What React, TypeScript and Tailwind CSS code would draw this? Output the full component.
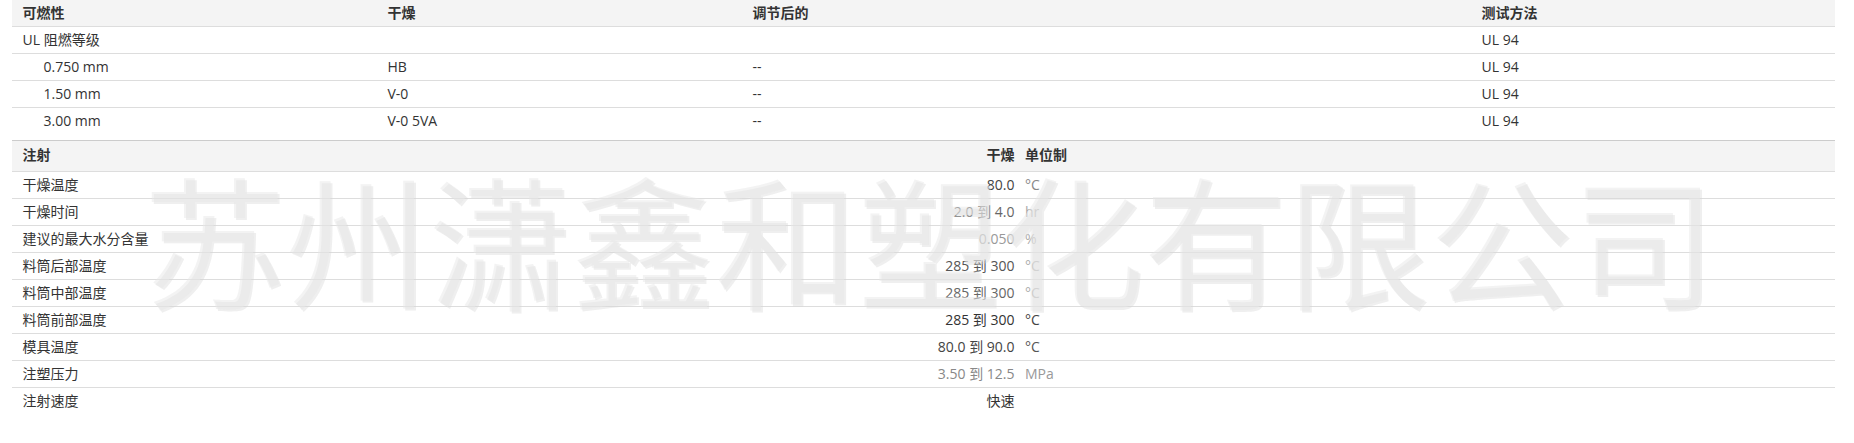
const font = { fontFamily: '"Open Sans","Noto Sans CJK SC",sans-serif' };

const t1 = [
  ["UL 阻燃等级", "", "", "UL 94", false],
  ["0.750 mm", "HB", "--", "UL 94", true],
  ["1.50 mm", "V-0", "--", "UL 94", true],
  ["3.00 mm", "V-0 5VA", "--", "UL 94", true],
] as const;

const t2 = [
  ["干燥温度", "80.0", "°C", "text-[#444]", "text-[#888]"],
  ["干燥时间", "2.0 到 4.0", "hr", "text-[#666]", "text-[#aaa]"],
  ["建议的最大水分含量", "0.050", "%", "text-[#999]", "text-[#aaa]"],
  ["料筒后部温度", "285 到 300", "°C", "text-[#555]", "text-[#aaa]"],
  ["料筒中部温度", "285 到 300", "°C", "text-[#666]", "text-[#aaa]"],
  ["料筒前部温度", "285 到 300", "°C", "text-[#333]", "text-[#444]"],
  ["模具温度", "80.0 到 90.0", "°C", "text-[#444]", "text-[#555]"],
  ["注塑压力", "3.50 到 12.5", "MPa", "text-[#888]", "text-[#999]"],
  ["注射速度", "快速", "", "text-[#333]", "text-[#333]"],
];

export default function App() {
  return (
    <div className="relative h-[443px] w-[1854px] overflow-hidden bg-white pl-3 pr-[19px] text-[14px] text-[#333]" style={font}>
      <div>
        <div className="grid h-[27px] grid-cols-[365px_365px_729px_1fr] items-center border-b border-[#ddd] bg-[#f4f4f4] pb-[2px] pl-[10.5px] font-bold">
          <span>可燃性</span><span>干燥</span><span>调节后的</span><span>测试方法</span>
        </div>
        {t1.map((r, i) => (
          <div key={i} className="grid h-[27px] grid-cols-[365px_365px_729px_1fr] items-center border-b border-[#ddd] pb-[2px] pl-[10.5px] last:border-b-0">
            <span className={r[4] ? "pl-[21px]" : ""}>{r[0]}</span><span>{r[1]}</span><span>{r[2]}</span><span>{r[3]}</span>
          </div>
        ))}
      </div>
      <div className="mt-[5px]">
        <div className="grid h-[32px] grid-cols-[850px_142px_1fr] items-center border-t border-b border-t-[#ccc] border-b-[#ddd] bg-[#f4f4f4] pb-[3px] pl-[10.5px] font-bold">
          <span>注射</span>
          <span className="text-right">干燥</span>
          <span className="pl-[10.5px]">单位制</span>
        </div>
        {t2.map((r, i) => (
          <div key={i} className="grid h-[27px] grid-cols-[850px_142px_1fr] items-center border-b border-[#ddd] pb-[2px] pl-[10.5px] last:border-b-0">
            <span>{r[0]}</span>
            <span className={`text-right ${r[3]}`}>{r[1]}</span>
            <span className={`pl-[10.5px] ${r[4]}`}>{r[2]}</span>
          </div>
        ))}
      </div>
      <div className="pointer-events-none absolute left-[143px] top-[172px] whitespace-nowrap text-[143px] leading-none text-[#e8e8e8]/50 [text-shadow:2px_2px_0_rgba(215,215,215,0.4)]">
        苏州潇鑫和塑化有限公司
      </div>
    </div>
  );
}
